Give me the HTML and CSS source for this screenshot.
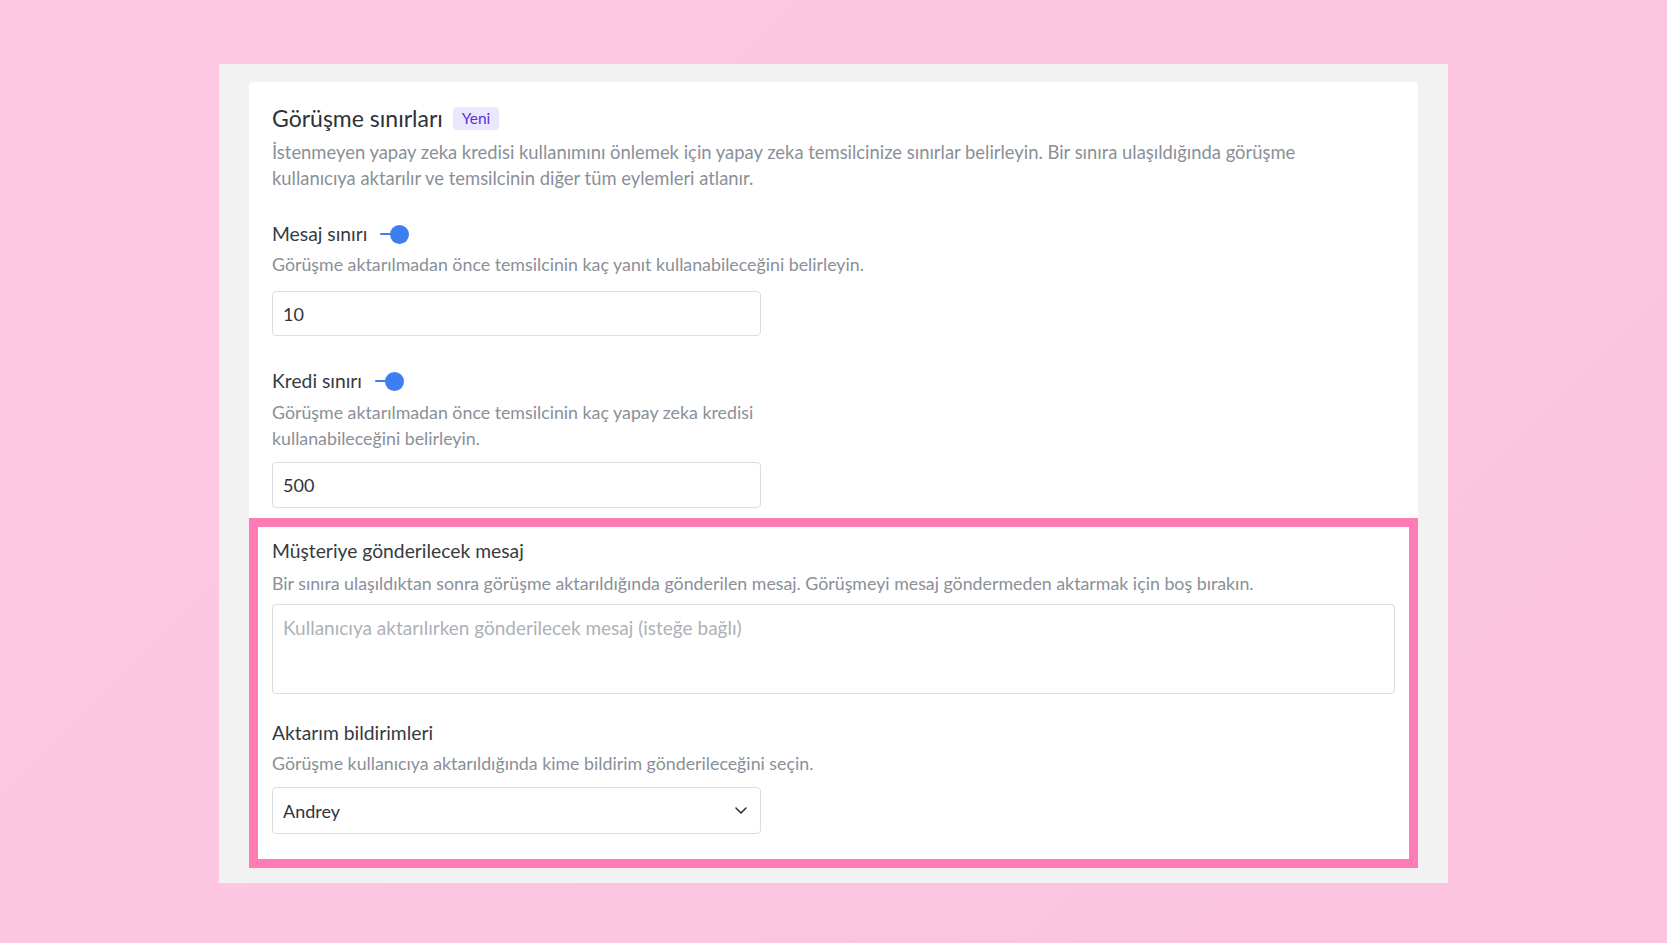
FILE: index.html
```html
<!DOCTYPE html>
<html lang="tr">
<head>
<meta charset="utf-8">
<title>Görüşme sınırları</title>
<link rel="stylesheet" href="styles.css">
</head>
<body>
<div class="frame">
  <div class="card">
    <div class="top">
      <div class="title-row">
        <h2 class="title">Görüşme sınırları</h2>
        <span class="badge">Yeni</span>
      </div>
      <p class="desc desc-title">İstenmeyen yapay zeka kredisi kullanımını önlemek için yapay zeka temsilcinize sınırlar belirleyin. Bir sınıra ulaşıldığında görüşme kullanıcıya aktarılır ve temsilcinin diğer tüm eylemleri atlanır.</p>

      <div class="field field-first">
        <div class="label-row">
          <span class="label">Mesaj sınırı</span>
          <span class="toggle"><span class="track"></span><span class="knob"></span></span>
        </div>
        <p class="desc">Görüşme aktarılmadan önce temsilcinin kaç yanıt kullanabileceğini belirleyin.</p>
        <input class="control control-first" type="text" value="10">
      </div>

      <div class="field field-second">
        <div class="label-row">
          <span class="label">Kredi sınırı</span>
          <span class="toggle"><span class="track"></span><span class="knob"></span></span>
        </div>
        <p class="desc desc-narrow">Görüşme aktarılmadan önce temsilcinin kaç yapay zeka kredisi kullanabileceğini belirleyin.</p>
        <input class="control control-second" type="text" value="500">
      </div>
    </div>

    <div class="highlight">
      <div class="field">
        <div class="label-row">
          <span class="label">Müşteriye gönderilecek mesaj</span>
        </div>
        <p class="desc desc-msg">Bir sınıra ulaşıldıktan sonra görüşme aktarıldığında gönderilen mesaj. Görüşmeyi mesaj göndermeden aktarmak için boş bırakın.</p>
        <textarea class="area" placeholder="Kullanıcıya aktarılırken gönderilecek mesaj (isteğe bağlı)"></textarea>
      </div>

      <div class="field field-notify">
        <div class="label-row">
          <span class="label">Aktarım bildirimleri</span>
        </div>
        <p class="desc">Görüşme kullanıcıya aktarıldığında kime bildirim gönderileceğini seçin.</p>
        <div class="select-wrap">
          <select class="control select">
            <option>Andrey</option>
          </select>
          <svg class="chevron" width="12" height="7" viewBox="0 0 12 7" aria-hidden="true"><polyline points="1,1 6,6 11,1" fill="none" stroke="#2f3238" stroke-width="1.6" stroke-linecap="round" stroke-linejoin="round"/></svg>
        </div>
      </div>
    </div>
  </div>
</div>
</body>
</html>
```

FILE: styles.css
```css
* { box-sizing: border-box; }

html, body {
  margin: 0;
  padding: 0;
}

body {
  width: 1667px;
  height: 943px;
  overflow: hidden;
  background: linear-gradient(135deg, #fdc8e2 0%, #fcc6e0 60%, #fcc4de 100%);
  font-family: Lato, "Open Sans", "Noto Sans", sans-serif;
  color: #2f333a;
  padding-top: 64px;
  padding-left: 219px;
}

.frame {
  width: 1229px;
  background: #f2f2f2;
  padding: 18px 30px 15px 30px;
}

.card {
  background: #ffffff;
  border-radius: 4px;
}

.top {
  padding: 22px 23px 10px 23px;
}

.title-row {
  display: flex;
  align-items: center;
  height: 28px;
}

.title {
  margin: 0;
  font-size: 23px;
  line-height: 28px;
  font-weight: 400;
  color: #2e3239;
}

.badge {
  margin-left: 10px;
  height: 23px;
  padding: 0 9px;
  border-radius: 4px;
  background: #ebe8fd;
  color: #5634d8;
  font-size: 15.5px;
  line-height: 23px;
}

.desc {
  margin: 4px 0 0 0;
  font-size: 17.8px;
  line-height: 26px;
  color: #8a8f98;
}

.desc-title {
  margin-top: 7px;
  max-width: 1060px;
  font-size: 18.4px;
}

.desc-narrow {
  margin-top: 5px;
  max-width: 500px;
}

.desc-msg {
  margin-top: 6px;
}

.field-first { margin-top: 30px; }
.field-second { margin-top: 32px; }
.field-notify { margin-top: 26px; }

.label-row {
  display: flex;
  align-items: center;
  height: 26px;
}

.label {
  font-size: 19.3px;
  line-height: 26px;
  font-weight: 400;
  color: #363a41;
}

.toggle {
  display: flex;
  align-items: center;
  margin-left: 13px;
}

.track {
  width: 11px;
  height: 1.6px;
  background: #3d7ef0;
  border-radius: 1px;
}

.knob {
  width: 19px;
  height: 19px;
  border-radius: 50%;
  background: #3d7ef0;
  margin-left: -1px;
}

.control {
  display: block;
  width: 489px;
  height: 45px;
  padding: 0 10px;
  border: 1px solid #dadde2;
  border-radius: 4px;
  background: #ffffff;
  font-family: Lato, "Open Sans", "Noto Sans", sans-serif;
  font-size: 18px;
  color: #2f333a;
  outline: none;
}

.control-first {
  margin-top: 14px;
}

.control-second {
  margin-top: 11px;
  height: 46px;
}

.highlight {
  border: 9px solid #ff7bb6;
  padding: 11px 14px 25px 14px;
}

.area {
  display: block;
  width: 100%;
  height: 90px;
  margin-top: 8px;
  padding: 10px 10px;
  border: 1px solid #dadde2;
  border-radius: 4px;
  font-family: Lato, "Open Sans", "Noto Sans", sans-serif;
  font-size: 19px;
  line-height: 26px;
  color: #2f333a;
  resize: none;
  outline: none;
}

.area::placeholder {
  color: #adb1b8;
}

.select-wrap {
  position: relative;
  width: 489px;
  margin-top: 11px;
}

.select {
  height: 47px;
  -webkit-appearance: none;
  appearance: none;
}

.chevron {
  position: absolute;
  right: 14px;
  top: 20px;
  pointer-events: none;
}
```
